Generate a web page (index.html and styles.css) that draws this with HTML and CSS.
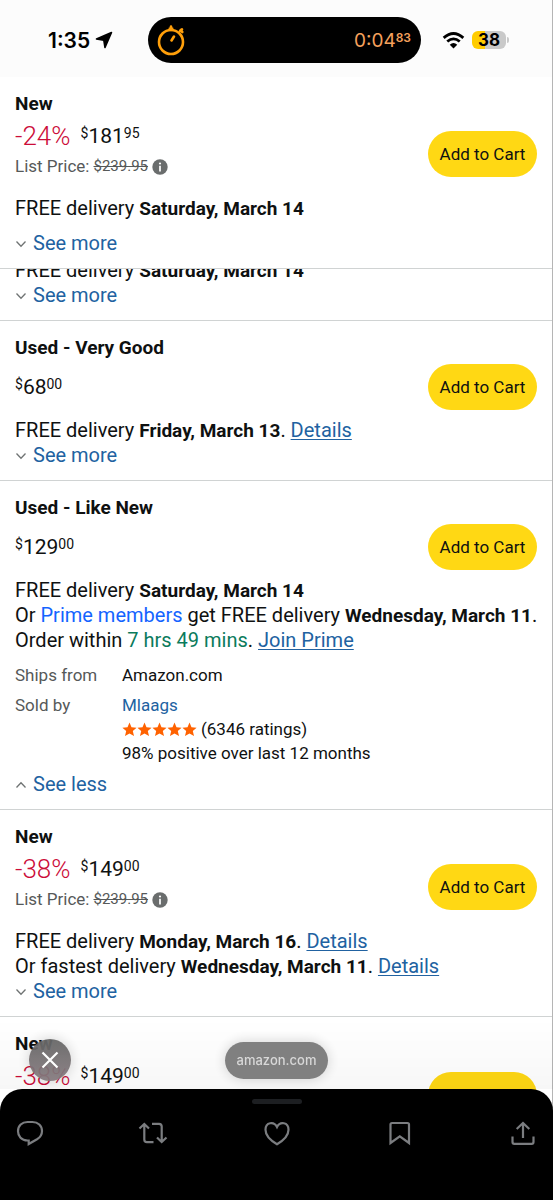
FILE: index.html
```html
<!DOCTYPE html>
<html lang="en">
<head>
<meta charset="utf-8">
<meta name="viewport" content="width=device-width, initial-scale=1">
<title>Buying options</title>
<link rel="stylesheet" href="styles.css">
</head>
<body>
<svg class="defs" aria-hidden="true">
  <symbol id="chevron" viewBox="0 0 12 8"><path d="M1.500 1.500L6 6.300L10.500 1.500" fill="none" stroke="#6f7373" stroke-width="1.300"/></symbol>
  <symbol id="info" viewBox="0 0 16 16"><circle cx="8" cy="8" r="7.700" fill="#6a6d6d"/><circle cx="8" cy="4.500" r="1.100" fill="#fff"/><path d="M8 6.700V12.500" stroke="#fff" stroke-width="1.700"/></symbol>
  <symbol id="star" viewBox="0 0 15 15"><path d="M7.500 .6L9.500 5.200L14.600 5.700L10.800 9L12 14L7.500 11.400L3 14L4.200 9L.4 5.700L5.500 5.200Z" fill="#ff6200"/></symbol>
</svg>
<div class="screen">
  <header class="status">
    <div class="clock">
      <span>1:35</span>
      <svg class="arrow" viewBox="0 0 18 18"><path d="M16.500 1.500L10 16.500L8.800 9.200L1.500 8Z" stroke="#000" stroke-width="1.600" stroke-linejoin="round"/></svg>
    </div>
    <div class="island">
      <svg class="timer" viewBox="0 0 30 32" fill="none" stroke="#ff9f0a" stroke-width="2.600" stroke-linecap="round"><circle cx="15" cy="18" r="12"/><path d="M15 2.500V6M13.800 4.500H16.200M24 7L26 5.300M24.500 6.200L26.300 8M15.500 16.500L18 12.500"/></svg>
      <span class="elapsed">0:04<small>83</small></span>
    </div>
    <div class="signals">
      <svg class="wifi" viewBox="0 0 24 18" fill="none" stroke="#000" stroke-width="3"><path d="M1.600 6.200Q12-3 22.400 6.200M5.400 10.100Q12 4.400 18.600 10.100"/><path d="M12 17.500L8 13.500Q12 9.800 16 13.500Z" fill="#000" stroke="none"/></svg>
      <span class="battery">38</span><span class="cap"></span>
    </div>
  </header>

  <section class="offer pinned">
    <h2>New</h2>
    <div class="buy">
      <div class="cost">
        <p class="price"><span class="off">-24%</span><span><sup>$</sup>181<sup>95</sup></span></p>
        <p class="list-price">List Price: <s>$239.95</s><svg><use href="#info"/></svg></p>
      </div>
      <button class="cart" type="button">Add to Cart</button>
    </div>
    <p>FREE delivery <b>Saturday, March 14</b></p>
    <a class="toggle spaced" href="#more"><svg><use href="#chevron"/></svg>See more</a>
  </section>

  <main class="offers">
    <section class="offer scrolled">
      <p>FREE delivery <b>Saturday, March 14</b></p>
      <a class="toggle" href="#more"><svg><use href="#chevron"/></svg>See more</a>
    </section>

    <section class="offer">
      <h2>Used - Very Good</h2>
      <div class="buy">
        <p class="price"><span><sup>$</sup>68<sup>00</sup></span></p>
        <button class="cart" type="button">Add to Cart</button>
      </div>
      <p>FREE delivery <b>Friday, March 13</b>. <a class="link" href="#details">Details</a></p>
      <a class="toggle" href="#more"><svg><use href="#chevron"/></svg>See more</a>
    </section>

    <section class="offer">
      <h2>Used - Like New</h2>
      <div class="buy">
        <p class="price"><span><sup>$</sup>129<sup>00</sup></span></p>
        <button class="cart" type="button">Add to Cart</button>
      </div>
      <p>FREE delivery <b>Saturday, March 14</b></p>
      <p class="line">Or <span class="prime">Prime members</span> get FREE delivery <b>Wednesday, March 11</b>.</p>
      <p>Order within <span class="time">7 hrs 49 mins</span>. <a class="link" href="#prime">Join Prime</a></p>
      <dl class="seller">
        <dt>Ships from</dt><dd>Amazon.com</dd>
        <dt>Sold by</dt>
        <dd><a href="#seller">Mlaags</a>
          <div class="rating"><span class="stars" role="img" aria-label="5 stars"><svg><use href="#star"/></svg><svg><use href="#star"/></svg><svg><use href="#star"/></svg><svg><use href="#star"/></svg><svg><use href="#star"/></svg></span>(6346 ratings)</div>
          <div>98% positive over last 12 months</div>
        </dd>
      </dl>
      <a class="toggle less" href="#less"><svg><use href="#chevron"/></svg>See less</a>
    </section>

    <section class="offer">
      <h2>New</h2>
      <div class="buy">
        <div class="cost">
          <p class="price"><span class="off">-38%</span><span><sup>$</sup>149<sup>00</sup></span></p>
          <p class="list-price">List Price: <s>$239.95</s><svg><use href="#info"/></svg></p>
        </div>
        <button class="cart" type="button">Add to Cart</button>
      </div>
      <p>FREE delivery <b>Monday, March 16</b>. <a class="link" href="#details">Details</a></p>
      <p>Or fastest delivery <b>Wednesday, March 11</b>. <a class="link" href="#details">Details</a></p>
      <a class="toggle" href="#more"><svg><use href="#chevron"/></svg>See more</a>
    </section>

    <section class="offer">
      <h2>New</h2>
      <div class="buy">
        <div class="cost">
          <p class="price"><span class="off">-38%</span><span><sup>$</sup>149<sup>00</sup></span></p>
        </div>
        <button class="cart low" type="button">Add to Cart</button>
      </div>
    </section>
  </main>

  <div class="dock">
    <div class="floating">
      <button class="close" type="button" aria-label="Close"><svg viewBox="0 0 18 18"><path d="M1.500 1.500L16.500 16.500M16.500 1.500L1.500 16.500" stroke="#fff" stroke-width="2.200"/></svg></button>
      <span class="domain">amazon.com</span>
    </div>
    <footer class="sheet">
      <span class="grabber"></span>
      <nav class="actions">
        <button type="button" aria-label="Reply"><svg viewBox="0 0 30 30"><path d="M13.700 22.500H12.500C6.500 22.500 3 18.200 3 13.200C3 7.800 7 4 12.500 4H17.500C23 4 27 7.800 27 13C27 16.800 25 19.500 22 21.300L13.700 26Z"/></svg></button>
        <button type="button" aria-label="Repost"><svg viewBox="0 0 30 30"><path d="M1.500 10.500L6.300 6L11 10.500M6.300 6.500V21.500Q6.300 24.200 9 24.200H15.500M14 5.800H21Q23.700 5.800 23.700 8.500V23.500M19 19.500L23.700 24L28.500 19.500"/></svg></button>
        <button type="button" aria-label="Like"><svg viewBox="0 0 30 30"><path d="M15 26.300Q3.500 19.500 3.500 11.800C3.500 4 12 3 15 9C18 3 26.500 4 26.500 11.800Q26.500 19.500 15 26.300Z"/></svg></button>
        <button type="button" aria-label="Bookmark"><svg viewBox="0 0 30 30"><path d="M5.500 6.500Q5.500 5 7 5H22.500Q24 5 24 6.500V25L14.800 18.300L5.500 25Z"/></svg></button>
        <button type="button" aria-label="Share"><svg viewBox="0 0 30 30"><path d="M15 20V5M8.700 11L15 5L21.300 11M4.500 18.500V24Q4.500 25.800 6.300 25.800H23.700Q25.500 25.800 25.500 24V18.500"/></svg></button>
      </nav>
    </footer>
  </div>
</div>
</body>
</html>
```
FILE: styles.css
```css
* { box-sizing: border-box; }
body, h2, p, dl, dd { margin: 0; }
body {
  background: #fff;
  color: #0f1111;
  font: 20px/25px Roboto, "Open Sans", sans-serif;
}
a { color: #2162a1; text-decoration: none; }
b { font-size: 19px; line-height: 20px; }
button { font: inherit; border: 0; padding: 0; }
svg { display: block; flex: none; }
.defs { position: absolute; width: 0; height: 0; }

.screen {
  height: 100vh;
  display: flex;
  flex-direction: column;
  overflow: hidden;
  border-right: 1px solid #b5b5b5;
}

.status {
  display: flex;
  align-items: center;
  padding: 17px 43px 14px 48px;
  background: #fcfcfc;
  color: #000;
  font-family: Inter, sans-serif;
}
.clock { display: flex; align-items: center; gap: 5px; width: 100px; font-size: 21px; font-weight: 600; }
.arrow { width: 18px; height: 18px; }
.island {
  display: flex;
  align-items: center;
  justify-content: space-between;
  width: 273px;
  height: 46px;
  padding: 0 10px 0 8px;
  border-radius: 23px;
  background: #000;
}
.timer { width: 30px; height: 32px; }
.elapsed { display: flex; color: #f5a15c; font-size: 19px; }
.elapsed small { font-size: 12px; line-height: 20px; font-weight: 600; }
.signals { display: flex; align-items: center; justify-content: flex-end; flex: 1; }
.wifi { width: 23px; height: 17px; margin-right: 7px; }
.battery {
  width: 34px;
  border-radius: 6px;
  background: linear-gradient(90deg, #ffcc00 38%, #c9c9c9 38%);
  font-size: 17px;
  line-height: 18px;
  font-weight: 700;
  text-align: center;
}
.cap { width: 2px; height: 6px; margin-left: 1px; border-radius: 0 2px 2px 0; background: #c9c9c9; }

.offer { padding: 14px 15px 12px; border-bottom: 1px solid #d0d3d3; }
.offers { flex: 1; min-height: 0; overflow: hidden; }
.scrolled { margin-top: -11px; padding-top: 0; }
h2 { font-size: 19px; line-height: 25px; font-weight: 700; }
.line { white-space: nowrap; }

.buy {
  display: flex;
  align-items: center;
  justify-content: space-between;
  margin: 4px 0 8px;
}
.cost { padding: 4px 0 11px; align-self: flex-start; }
.price { display: flex; gap: 10px; font-size: 21px; }
.price sup { font-size: 14px; line-height: 0; vertical-align: 5px; }
.off { font-size: 26px; font-weight: 300; color: #cc0c39; }
.list-price { display: flex; align-items: center; gap: 4px; margin-top: 7px; font-size: 17px; line-height: 21px; color: #565959; }
.list-price s { font-size: 15px; }
.list-price svg { width: 16px; height: 16px; }
.cart {
  width: 109px;
  height: 46px;
  border-radius: 23px;
  background: #ffd814;
  color: #0f1111;
  font-size: 17px;
}
.low { margin-top: 12px; }
.link { text-decoration: underline; text-underline-offset: 2px; text-decoration-thickness: 1px; }
.prime { color: #1464ff; }
.time { color: #0b7b5c; }

.toggle { display: flex; align-items: center; gap: 6px; width: max-content; }
.toggle svg { width: 12px; height: 8px; }
.spaced { margin-top: 10px; }
.less svg { transform: rotate(180deg); }

.seller {
  display: grid;
  grid-template-columns: 107px 1fr;
  row-gap: 6px;
  margin: 10px 0 7px;
  font-size: 17px;
  line-height: 24px;
}
.seller dt { color: #565959; }
.rating { display: flex; align-items: center; gap: 4px; }
.stars { display: flex; }
.stars svg { width: 15px; height: 15px; }

.dock { position: fixed; left: 0; right: 0; bottom: 0; }
.floating {
  display: grid;
  grid-template-columns: 1fr auto 1fr;
  align-items: center;
  padding: 20px 29px 8px;
  background: linear-gradient(#0000, #00000008);
}
.close, .domain { background: #777777ee; box-shadow: 0 0 14px #0000002e; }
.close {
  display: grid;
  place-items: center;
  width: 42px;
  height: 42px;
  border-radius: 50%;
  background: linear-gradient(#666666f0, #857a7eee);
}
.close svg { width: 18px; height: 18px; }
.domain {
  padding: 0 12px;
  border-radius: 19px;
  color: #d8d8d8;
  font: 500 13px/37px Inter, sans-serif;
}
.sheet {
  display: flex;
  flex-direction: column;
  align-items: center;
  padding: 10px 15px 52px;
  border-radius: 22px 22px 0 0;
  background: #000;
}
.grabber { width: 50px; height: 5px; border-radius: 3px; background: #1d1f22; }
.actions { display: flex; justify-content: space-between; width: 100%; margin-top: 14px; }
.actions button { background: none; }
.actions svg { width: 30px; height: 30px; fill: none; stroke: #7b7d80; stroke-width: 2.2; }
```
